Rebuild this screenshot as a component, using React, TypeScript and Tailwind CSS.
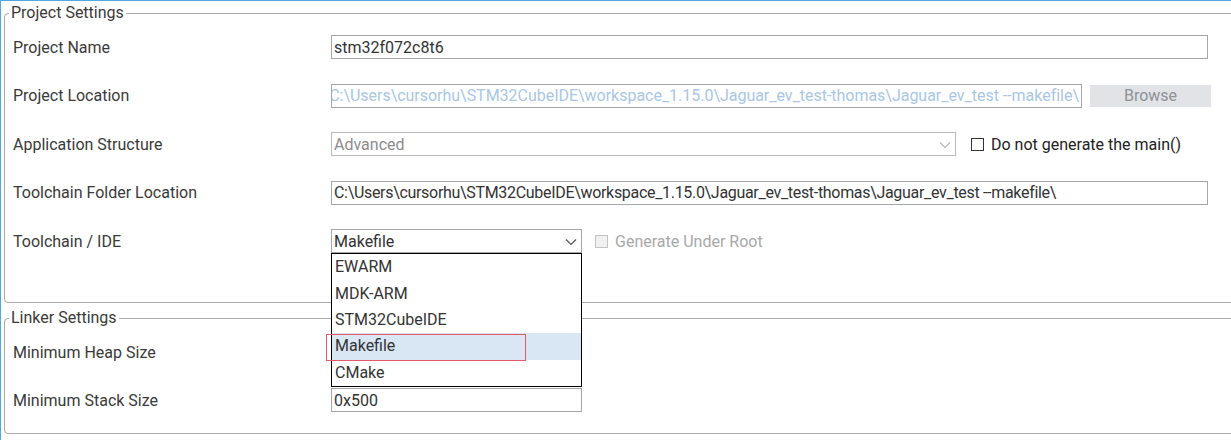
import React from "react";

function Chevron({ color }: { color: string }) {
  return (
    <svg width="12" height="8" viewBox="0 0 12 8" className="shrink-0">
      <polyline points="1,1.5 6,6.5 11,1.5" fill="none" stroke={color} strokeWidth="1.2" />
    </svg>
  );
}

function Label({ children }: { children: React.ReactNode }) {
  return <div className="w-[318px] shrink-0 text-[#3a3a3a] pt-[1px]">{children}</div>;
}

export default function App() {
  const path =
    "C:\\Users\\cursorhu\\STM32CubeIDE\\workspace_1.15.0\\Jaguar_ev_test-thomas\\Jaguar_ev_test --makefile\\";
  return (
    <div className="w-[1231px] h-[440px] overflow-hidden bg-white border-t border-l border-[#4ea8e2] pl-[3px] pt-[3px] text-[16px] leading-[18px] text-[#333] font-['Roboto',sans-serif]">
      <fieldset className="w-[1250px] border border-[#a9a9a9] rounded-[4px] p-0 m-0">
        <legend className="ml-[4px] px-[2px] leading-[18px] text-[#3a3a3a]">Project Settings</legend>
        <div className="flex flex-col gap-[24.5px] pl-[8px] pt-[13px] pb-[49px]">
          <div className="flex items-center h-6">
            <Label>Project Name</Label>
            <div className="w-[877px] h-6 border border-[#a3a6aa] flex items-center px-[2px] pt-[1px]">stm32f072c8t6</div>
          </div>
          <div className="flex items-center h-6">
            <Label>Project Location</Label>
            <div className="w-[751px] h-6 border border-[#a3a6aa] flex items-center justify-end overflow-hidden whitespace-nowrap pr-[2px] pt-[1px] text-[#a9c6e6]">
              <span className="shrink-0 tracking-[-0.02px]">{path}</span>
            </div>
            <div className="ml-[8px] w-[121px] h-[22px] bg-[#e1e3e6] flex items-center justify-center text-[#8e9196]">Browse</div>
          </div>
          <div className="flex items-center h-6">
            <Label>Application Structure</Label>
            <div className="w-[625px] h-6 border border-[#b9bcc0] flex items-center justify-between px-[2px] pr-[4px] pt-[1px] text-[#8c8c8c]">
              <span>Advanced</span>
              <Chevron color="#b5b5b5" />
            </div>
            <div className="ml-[15px] w-[13px] h-[13px] border border-[#333] bg-white" />
            <span className="ml-[7px] text-[#222] pt-[1px]">Do not generate the main()</span>
          </div>
          <div className="flex items-center h-6">
            <Label>Toolchain Folder Location</Label>
            <div className="w-[877px] h-6 border border-[#a3a6aa] flex items-center px-[2px] pt-[1px] whitespace-nowrap overflow-hidden">
              <span className="tracking-[-0.31px]">{path}</span>
            </div>
          </div>
          <div className="flex items-center h-6">
            <Label>Toolchain / IDE</Label>
            <div className="relative w-[251px] h-6 z-10">
              <div className="w-full h-6 border border-[#a3a6aa] flex items-center justify-between px-[2px] pr-[4px] pt-[1px] bg-white">
                <span>Makefile</span>
                <Chevron color="#555" />
              </div>
              <div className="absolute left-0 top-full w-[251px] border border-black bg-white flex flex-col">
                <div className="h-[26.4px] flex items-center px-[3px]">EWARM</div>
                <div className="h-[26.4px] flex items-center px-[3px]">MDK-ARM</div>
                <div className="h-[26.4px] flex items-center px-[3px]">STM32CubeIDE</div>
                <div className="h-[26.4px] flex items-center px-[3px] bg-[#d9e7f5]">Makefile</div>
                <div className="h-[26.4px] flex items-center px-[3px]">CMake</div>
                <div className="absolute left-[-6px] top-[80px] w-[200px] h-[27px] border border-[#e35a66]" />
              </div>
            </div>
            <div className="ml-[13px] w-[13px] h-[13px] border border-[#c3c3c3] bg-[#f1f1f1]" />
            <span className="ml-[7px] text-[#a8a8a8] pt-[1px]">Generate Under Root</span>
          </div>
        </div>
      </fieldset>
      <fieldset className="mt-[6px] w-[1250px] border border-[#a9a9a9] rounded-[4px] p-0 m-0">
        <legend className="ml-[4px] px-[2px] leading-[18px] text-[#3a3a3a]">Linker Settings</legend>
        <div className="flex flex-col gap-[24px] pl-[8px] pt-[13px] pb-[21px]">
          <div className="flex items-center h-6">
            <Label>Minimum Heap Size</Label>
            <div className="w-[251px] h-6 border border-[#a3a6aa]" />
          </div>
          <div className="flex items-center h-6">
            <Label>Minimum Stack Size</Label>
            <div className="w-[251px] h-6 border border-[#a3a6aa] flex items-center px-[2px] pt-[1px]">0x500</div>
          </div>
        </div>
      </fieldset>
    </div>
  );
}
